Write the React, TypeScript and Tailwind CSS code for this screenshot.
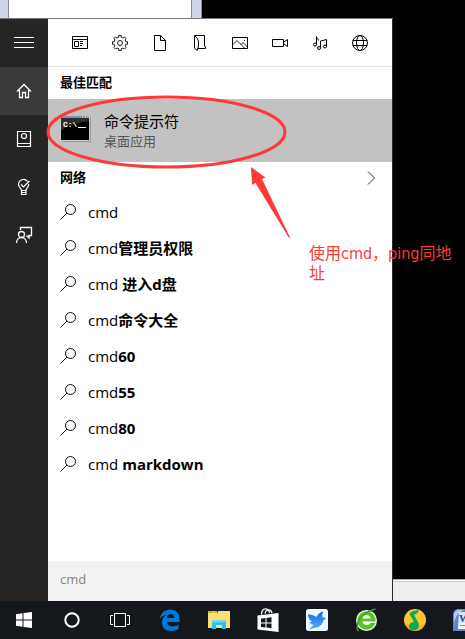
import { useState } from 'react';
import type { ReactNode } from 'react';

const suggestions = [
    { typed: 'cmd', rest: '' },
    { typed: 'cmd', rest: '管理员权限' },
    { typed: 'cmd ', rest: '进入d盘' },
    { typed: 'cmd', rest: '命令大全' },
    { typed: 'cmd', rest: '60' },
    { typed: 'cmd', rest: '55' },
    { typed: 'cmd', rest: '80' },
    { typed: 'cmd ', rest: 'markdown' },
];

function Line({ children }: { children: ReactNode }) {
    return (
        <svg viewBox="0 0 16 16" className="w-4 h-4 overflow-visible" fill="none" stroke="currentColor" aria-hidden="true">
            {children}
        </svg>
    );
}

const gearPath = () => {
    const points: string[] = [];
    for (let i = 0; i < 8; i++) {
        const a = (i * Math.PI) / 4;
        [[-0.22, 5.9], [-0.17, 7.6], [0.17, 7.6], [0.22, 5.9]].forEach(([d, r]) => {
            points.push(`${(8 + r * Math.sin(a + d)).toFixed(2)} ${(8 - r * Math.cos(a + d)).toFixed(2)}`);
        });
    }
    return `M${points.join('L')}Z`;
};

const filters = [
    {
        name: '应用',
        icon: <Line><path d="M.5 1.5h15v12H.5zM.5 4.5h15M2.5 6.5h4v5h-4zM8 6.5h3M8 8.5h3M8 10.5h2" /></Line>,
    },
    {
        name: '设置',
        icon: <Line><path d={gearPath()} strokeWidth="0.9" /><circle cx="8" cy="8" r="2.5" strokeWidth="0.9" /></Line>,
    },
    {
        name: '文档',
        icon: <Line><path d="M2.5.5h6l5 5v10h-11zM8.5.5v5h5" /></Line>,
    },
    {
        name: '文件夹',
        icon: <Line><path d="M2.5.5h10v10.5l1 1v1.5H6M2.5.5V13L5 15.5 6.5 11V6.5l-1-3-3-3" /></Line>,
    },
    {
        name: '照片',
        icon: <Line><path d="M.5 2.5h15v11H.5z" /><path d="M1 9.5l4-4 7.5 7.5M9 9.5l2-2 4.5 4.5M12 5.5h1" strokeWidth="0.9" /></Line>,
    },
    {
        name: '视频',
        icon: <Line><path d="M.5 4.5h11v7H.5zM12 7l3.5-2.5v7L12 9" /></Line>,
    },
    {
        name: '音乐',
        icon: (
            <Line>
                <path d="M4.5 9.5v-8c0 1.5 2 2 2 4M8.5 13V6l6-1.5v7" />
                <circle cx="3" cy="9.5" r="1.5" />
                <circle cx="7" cy="13" r="1.5" />
                <circle cx="13" cy="11.5" r="1.5" />
            </Line>
        ),
    },
    {
        name: '网页',
        icon: (
            <Line>
                <circle cx="8" cy="8" r="7.5" />
                <ellipse cx="8" cy="8" rx="3.5" ry="7.5" />
                <path d="M1 5.5h14M1 10.5h14" />
            </Line>
        ),
    },
];

const sideItems = [
    {
        name: '菜单',
        icon: (
            <svg viewBox="0 0 20 12" className="w-5 h-3" stroke="currentColor" aria-hidden="true">
                <path d="M0 .5h20M0 5.5h20M0 10.5h20" />
            </svg>
        ),
    },
    {
        name: '主页',
        active: true,
        icon: <Line><path d="M1 8.5l7-7 7 7M3.5 7v7.5h3v-5h3v5h3V7" strokeWidth="1.3" /></Line>,
    },
    {
        name: '笔记本',
        icon: <Line><path d="M1.5.5h13v15h-13zM1.5 12.5h13" strokeWidth="1.2" /><circle cx="8" cy="5" r="2.5" strokeWidth="1.2" /></Line>,
    },
    {
        name: '提示',
        icon: (
            <Line>
                <path d="M5.5 11.5C5.5 9 2.5 8.5 2.5 5.5a5 5 0 0 1 9-3M12.7 5c.3 3.5-2.7 4-2.7 6.5v4H5.5v-4H10M5.5 13.5H10M5 5.5L7.5 8l6-6" strokeWidth="1.2" />
            </Line>
        ),
    },
    {
        name: '反馈',
        icon: (
            <Line>
                <circle cx="5.5" cy="7.5" r="3" strokeWidth="1.3" />
                <path d="M.5 16c0-3 2-5.5 5-5.5s5 2.5 5 5.5M4.5 3V.5h11v8H13V11l-2.5-2.5" strokeWidth="1.3" />
            </Line>
        ),
    },
];

const systemItems = [
    {
        name: '开始',
        icon: (
            <svg viewBox="0 0 16 16" className="w-4 h-4" fill="#fff" aria-hidden="true">
                <path d="M0 2.2l6.5-.9v6.2H0zM7.5 1.1L16 0v7.5H7.5zM0 8.5h6.5v6.2L0 13.8zM7.5 8.5H16V16l-8.5-1.1z" />
            </svg>
        ),
    },
    {
        name: 'Cortana',
        icon: (
            <svg viewBox="0 0 16 16" className="w-4 h-4" fill="none" stroke="#fff" strokeWidth="2" aria-hidden="true">
                <circle cx="8" cy="8" r="6.7" />
            </svg>
        ),
    },
    {
        name: '任务视图',
        icon: (
            <svg viewBox="0 0 20 14" className="w-5 h-3.5" fill="none" stroke="#fff" aria-hidden="true">
                <path d="M4.5.5h11v13h-11zM3 2.5H.5v9H3M17 2.5h2.5v9H17" />
            </svg>
        ),
    },
];

const pinnedItems = [
    {
        name: 'Edge',
        icon: (
            <svg viewBox="0 0 22 22" className="w-[22px] h-[22px]" fill="#0078d7" aria-hidden="true">
                <path d="M1 9.5C2 4 5.5.5 11 .5c6 0 9.500 4 9.500 9.500v3H8c.2 3 2.600 4.500 5.700 4.500 2 0 4-.6 5.800-1.700v4.300c-2 1.200-4.400 1.800-7 1.800-6 0-9.500-3.500-9.500-8.500 0-3.500 1.800-6.300 5-8C5 6.200 2.500 7.300 1 9.500zM8 9h7c0-2.500-1.300-3.900-3.400-3.900C9.600 5.100 8.300 6.600 8 9z" />
            </svg>
        ),
    },
    {
        name: '文件资源管理器',
        icon: (
            <svg viewBox="0 0 22 20" className="w-[22px] h-5" aria-hidden="true">
                <path d="M0 2.5h9.5l1-1.5H22v17H0z" fill="#fddf78" />
                <path d="M0 1h9v2H0z" fill="#f3bb20" />
                <path d="M1.5 1.5h2v1h-2z" fill="#5fb94a" />
                <path d="M4 19v-8.5h14V19h-4v-4H8v4z" fill="#29bdf0" />
                <path d="M4 10.5h14v2H4z" fill="#6dd6f8" />
            </svg>
        ),
    },
    {
        name: '应用商店',
        icon: (
            <svg viewBox="0 0 22 24" className="w-[22px] h-6" aria-hidden="true">
                <path d="M4.5 6.5C4.5 3 6 .8 8.5.8c2 0 3.5 1.5 4 4.2M8 5.5c.5-2.5 2-3.700 4-3.700 1.500 0 2.500 1.200 3 3.200" fill="none" stroke="#fff" strokeWidth="1.3" />
                <path d="M.5 7.5L21.500 5v19L.5 21.500z" fill="#fff" />
                <path d="M4 10.700l4.500-.6v4.400H4zM9.500 10l5-.7v5.200h-5zM4 15.500h4.500v4L4 19zM9.500 15.500h5v4.700l-5-.6z" fill="#14181c" />
            </svg>
        ),
    },
    {
        name: '迅雷',
        icon: (
            <svg viewBox="0 0 24 24" className="w-6 h-6" aria-hidden="true">
                <defs>
                    <linearGradient id="bird" x1="0" y1="0" x2="0" y2="1">
                        <stop offset="0" stopColor="#1567e2" />
                        <stop offset="1" stopColor="#58b4fb" />
                    </linearGradient>
                </defs>
                <rect x="1" y="1" width="22" height="22" rx="2.5" fill="#f2f8ff" />
                <path d="M3 6.5c3-.3 6 .8 8.500 2.500 1.500-3.500 4-5 7-5.500-1.500 2-1.500 4-1 6 1.500-.3 3 .3 4 1.500-2 .3-3 1-3.500 2.500-1 4-4.500 6-8.500 6.500-1.500.3-3.500 1-5 2 1-2.500 2.500-4 4.500-5-2.500-.5-4-1.500-4.500-3h2.500C4.500 12 3.200 9.500 3 6.500z" fill="url(#bird)" />
            </svg>
        ),
    },
    {
        name: '360浏览器',
        icon: (
            <svg viewBox="0 0 24 24" className="w-6 h-6 overflow-visible" aria-hidden="true">
                <circle cx="12.5" cy="12.5" r="10.5" fill="#f2faef" />
                <circle cx="12.5" cy="12.5" r="9.2" fill="#5fc02f" />
                <path d="M8.5 10.5c.5-2.300 2-3.500 4-3.500s3.700 1.200 4.200 3.500z" fill="#fff" />
                <path d="M8.5 13.5H22v1.200h-5.500c-.8 1.500-2 2.300-4 2.300-2.200 0-3.600-1.200-4-3.500z" fill="#fff" />
                <path d="M3.5 23.5C1 19 3.500 9.500 10 5.500 14 2.500 19 .5 22.500.5 20 3.500 14 3.500 9 7.500 4.500 11.500 3 18 5 23z" fill="#3ba41c" />
            </svg>
        ),
    },
    {
        name: 'QQ音乐',
        icon: (
            <svg viewBox="0 0 24 24" className="w-6 h-6" aria-hidden="true">
                <circle cx="12" cy="12" r="11" fill="#fcc735" />
                <path d="M2 15a10.5 10.5 0 0 0 20 0c-4 4-15 4-20 0z" fill="#f7ab2a" />
                <path d="M15.5 1.3c.3 3.200-1.500 4.700-4.500 5.700l3.500 6c1.500 2.500 1.700 4 1.200 5.500-.8 2.500-3 4-5.200 4-2.500 0-4.500-1.800-4.500-4.200 0-2.500 2-4.300 5-4.300L6.500 6C8 2.500 13 3.500 15.500 1.300z" fill="#12a650" />
            </svg>
        ),
    },
    {
        name: 'Word',
        icon: (
            <svg viewBox="0 0 24 24" className="w-6 h-6" aria-hidden="true">
                <path d="M1 23V7c0-4 2-6 6-6h16v22z" fill="#5f86c8" />
                <path d="M2 16V7c0-3 2-5 5-5h5C6 4 3 9 2 16z" fill="#b4cdf2" />
                <path d="M7 4h16v17H6z" fill="#f0f5fd" />
                <path d="M7 4h9v11H7z" fill="#d9e5f8" />
                <text x="7" y="14" fontFamily="Liberation Serif, serif" fontWeight="700" fontSize="11" fill="#2350a0">W</text>
                <path d="M8 17.5h15M18 14.5h5M18 8.5h5" stroke="#6f95d4" />
            </svg>
        ),
    },
];

function ConsoleIcon() {
    return (
        <svg viewBox="0 0 32 28" className="w-8 h-7 shrink-0" aria-hidden="true">
            <rect x="2" y="2" width="29" height="25" rx="1" fill="#999" />
            <rect x="0" y="1" width="30" height="25" rx="1" fill="#c9ccd1" />
            <rect x="1" y="1" width="28" height="2" fill="#7d8fa9" />
            <path d="M22 2h1M25 2h1M27.5 2h1" stroke="#fff" />
            <rect x="1" y="3" width="28" height="22" fill="#000" />
            <path d="M1 3h28v3C15 8 6 11 1 16z" fill="#2d2d2d" />
            <text x="3" y="12" fontFamily="Liberation Mono, monospace" fontWeight="700" fontSize="8" fill="#fff">C:\</text>
            <path d="M18 12.5h8" stroke="#fff" />
        </svg>
    );
}

function SearchIcon() {
    return (
        <svg viewBox="0 0 16 16" className="w-4 h-4 shrink-0" fill="none" stroke="#111" aria-hidden="true">
            <circle cx="10.5" cy="5.5" r="5" />
            <path d="M7 9L.5 15.5" />
        </svg>
    );
}

export default function App() {
    const [query, setQuery] = useState('cmd');

    return (
        <div className="relative flex min-h-screen flex-col overflow-hidden bg-black font-['Open_Sans','Noto_Sans_CJK_SC',sans-serif] text-black">
            <div className="flex flex-1">
                <div className="flex w-[393px] shrink-0 flex-col">
                    {/* window behind the menu */}
                    <div className="flex h-[19px] border-b border-[#77777b]">
                        <div className="w-[9px] border-r border-[#888b99] bg-[#cfd6ec]" />
                        <div className="w-[182px] bg-white" />
                        <div className="w-[11px] border-x border-[#888b99] bg-[#cfd6ec]" />
                        <div className="flex-1 bg-black" />
                    </div>

                    <div className="flex flex-1 border-r border-[#2b2b2b] bg-white">
                        <nav className="w-12 shrink-0 bg-[#272523] text-white">
                            {sideItems.map((item) => (
                                <button
                                    key={item.name}
                                    aria-label={item.name}
                                    className={`flex h-12 w-12 items-center justify-center ${item.active ? 'bg-[#3c3a38]' : ''}`}
                                >
                                    {item.icon}
                                </button>
                            ))}
                        </nav>

                        <main className="flex min-w-0 flex-1 flex-col">
                            <div className="flex h-12 items-center border-b border-[#e0e0e0] px-3">
                                {filters.map((filter) => (
                                    <button key={filter.name} aria-label={filter.name} className="flex h-10 w-10 items-center justify-center">
                                        {filter.icon}
                                    </button>
                                ))}
                            </div>

                            <h2 className="flex h-8 items-center px-3 text-[13px] font-bold">最佳匹配</h2>
                            <button className="flex h-[63px] items-center gap-3 bg-[#c2c2c2] px-3 text-left">
                                <span className="pb-1">
                                    <ConsoleIcon />
                                </span>
                                <span className="flex flex-col">
                                    <span className="text-[15px] leading-5">命令提示符</span>
                                    <span className="text-[13px] leading-5 text-[#555]">桌面应用</span>
                                </span>
                            </button>

                            <div className="flex h-8 items-center justify-between px-3">
                                <h2 className="text-[13px] font-bold">网络</h2>
                                <button aria-label="更多" className="px-1">
                                    <svg viewBox="0 0 10 14" className="h-3.5 w-2.5" fill="none" stroke="#333" aria-hidden="true">
                                        <path d="M2 .5L8.5 7 2 13.5" />
                                    </svg>
                                </button>
                            </div>

                            <ul className="flex-1">
                                {suggestions.map((item) => (
                                    <li key={item.typed + item.rest}>
                                        <button className="flex h-9 w-full items-center gap-3 px-3 text-left text-[15px]">
                                            <SearchIcon />
                                            <span className="whitespace-pre">
                                                {item.typed}
                                                <b>{item.rest}</b>
                                            </span>
                                        </button>
                                    </li>
                                ))}
                            </ul>

                            <input
                                type="text"
                                aria-label="搜索"
                                value={query}
                                onChange={(e) => setQuery(e.target.value)}
                                className="h-10 w-full bg-[#f2f2f2] px-3 pb-1 text-[13px] text-[#858585] outline-none"
                            />
                        </main>
                    </div>
                </div>

                <div className="flex flex-1 flex-col justify-end">
                    <div className="h-[22px] border-t border-[#aaa] bg-[#eee]">
                        <div className="h-0.5 border-b border-[#cfcbd2] bg-white" />
                    </div>
                </div>
            </div>

            <footer className="flex h-[38px] bg-[#14181c]">
                {systemItems.map((item) => (
                    <button key={item.name} aria-label={item.name} className="flex w-12 shrink-0 items-center justify-center">
                        {item.icon}
                    </button>
                ))}
                <div className="flex pl-px">
                    {pinnedItems.map((item) => (
                        <button key={item.name} aria-label={item.name} className="flex w-[49px] shrink-0 items-center justify-center">
                            {item.icon}
                        </button>
                    ))}
                </div>
            </footer>

            {/* red markup drawn over the desktop */}
            <svg viewBox="0 0 300 250" className="pointer-events-none absolute left-0 top-0 h-[250px] w-[300px]" aria-hidden="true">
                <ellipse cx="166.5" cy="132" rx="118.5" ry="35" fill="none" stroke="#fb3a3a" strokeWidth="3" />
                <path d="M251 167l14.5 10.5L262 179l28 58.500-1 .5L255.500 183l-3.500 2z" fill="#fb3a3a" />
            </svg>
            <p className="absolute left-[309px] top-[244px] w-[148px] font-['DejaVu_Sans_Condensed','Noto_Sans_CJK_SC',sans-serif] text-[16px] leading-5 text-[#fb3a3a]">
                使用cmd，ping同地址
            </p>
        </div>
    );
}
